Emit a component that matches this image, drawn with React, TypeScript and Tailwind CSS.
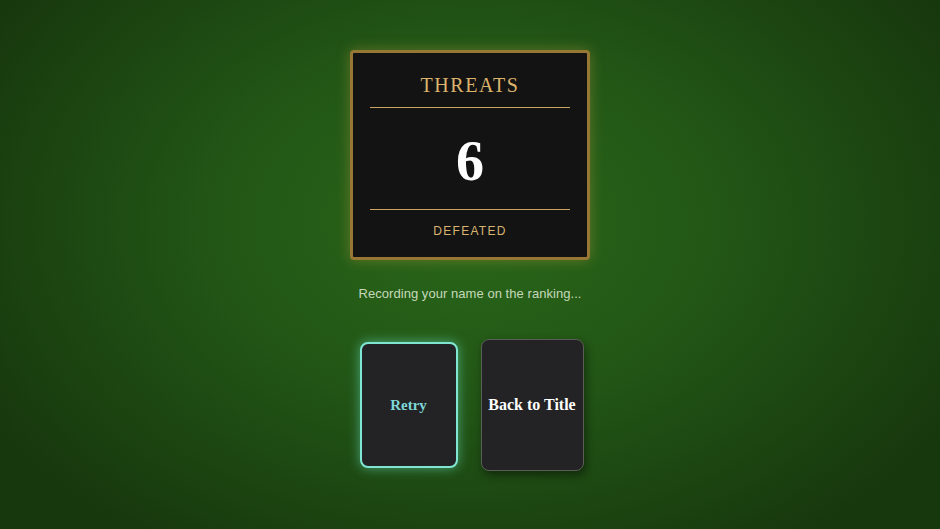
export default function App() {
  return (
    <div className="w-[940px] h-[529px] overflow-hidden flex flex-col items-center bg-[radial-gradient(ellipse_60%_75%_at_50%_42%,#2a6719_0%,#225616_45%,#17370d_100%)]">
      <div className="mt-[50px] w-[240px] h-[210px] rounded-[4px] border-[3px] border-[#967734] bg-[#141313] shadow-[0_0_14px_rgba(214,170,70,0.35)] flex flex-col items-center px-[17px] pt-[20px]">
        <div className="h-[24px] leading-[24px] text-[20px] tracking-[1.6px] text-[#dcb46c] font-['Liberation_Serif',serif]">THREATS</div>
        <div className="mt-[10px] w-full h-px bg-[#c9a463]" />
        <div className="h-[101px] w-full flex items-center justify-center">
          <span className="text-[56px] leading-none font-bold text-white font-['Liberation_Serif',serif] mt-[4px]">6</span>
        </div>
        <div className="w-full h-px bg-[#c9a463]" />
        <div className="mt-[13px] h-[16px] leading-[16px] text-[12px] tracking-[1.3px] text-[#d7b370] font-['Liberation_Sans',sans-serif]">DEFEATED</div>
      </div>

      <p className="mt-[26px] text-[13px] leading-[16px] tracking-[0.05px] text-[#c6d8bb] font-['Liberation_Sans',sans-serif]">
        Recording your name on the ranking...
      </p>

      <div className="mt-[37px] h-[132px] flex items-center gap-[23px] ml-[3px]">
        <button className="w-[98px] h-[126px] rounded-[8px] border-2 border-[#7fe6d4] bg-[#232224] shadow-[0_0_12px_rgba(110,235,210,0.55)] flex items-center justify-center">
          <span className="text-[15px] font-bold text-[#7ed7d6] font-['Liberation_Serif',serif]">Retry</span>
        </button>
        <button className="w-[103px] h-[132px] rounded-[8px] border border-[#5b5d58] bg-[#232224] shadow-[2px_4px_10px_rgba(0,0,0,0.45)] flex items-center justify-center">
          <span className="text-[16px] font-bold text-white font-['Liberation_Serif',serif]">Back to Title</span>
        </button>
      </div>
    </div>
  );
}
